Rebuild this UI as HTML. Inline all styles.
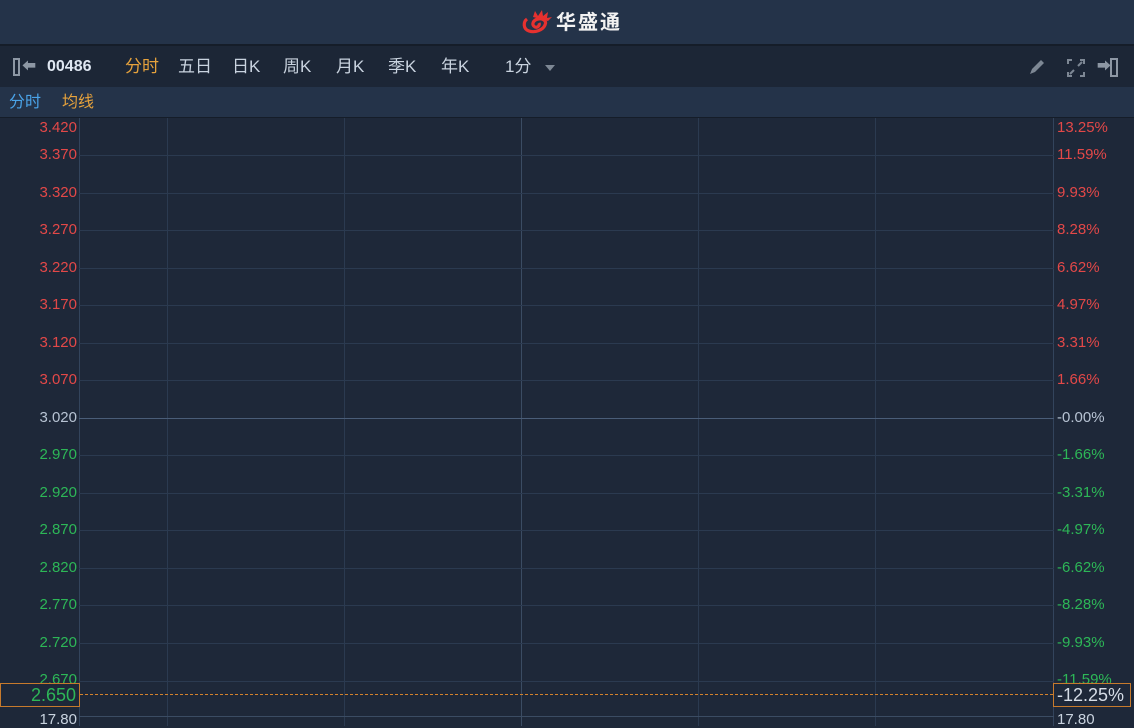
<!DOCTYPE html>
<html><head><meta charset="utf-8"><style>
*{margin:0;padding:0;box-sizing:border-box}
body{width:1134px;height:726px;overflow:hidden;background:#1e2839;font-family:"Liberation Sans","Noto Sans CJK SC",sans-serif;position:relative}
.a{position:absolute}
.t{position:absolute;font-size:15px;line-height:16px;white-space:nowrap}
.l{right:1057px;text-align:right}
.r{left:1057px}
.red{color:#e34848}.grn{color:#2db757}.gry{color:#b7c3d3}
.h{position:absolute;left:79px;width:975px;height:1px;background:#2b3a50}
.v{position:absolute;top:118px;width:1px;height:608px;background:#2b3a50}
.tb{position:absolute;top:56px;font-size:17px;color:#c9d3df;line-height:22px}
</style></head><body>
<div class="a" style="left:0;top:0;width:1134px;height:44px;background:#243349"></div>
<div class="a" style="left:0;top:44px;width:1134px;height:2px;background:#151d29"></div>
<div class="a" style="left:0;top:46px;width:1134px;height:41px;background:#1c2636"></div>
<div class="a" style="left:0;top:87px;width:1134px;height:31px;background:#243349;border-bottom:1px solid #151d29"></div>
<!-- logo -->
<svg class="a" style="left:521px;top:9px" width="32" height="26" viewBox="0 0 32 26"><path d="M6 10 C2 13 2 20 8 22 C14 24 22 21 24 16 C26 12 22 9 17 10 C12 11 10 16 14 18 C17 19 19 16 18 14" fill="none" stroke="#e6312f" stroke-width="3.2"/><path d="M12 8 L14 2 L17 7 L21 1 L22 7 L27 3 L26 9 L31 8 L27 12" fill="#e6312f"/></svg>
<div class="t" style="left:556px;top:11px;font-size:20px;line-height:24px;color:#f2f2f2;font-weight:bold;letter-spacing:2px">华盛通</div>
<!-- toolbar -->
<div class="a" style="left:13px;top:58px;width:7px;height:18px;border:2px solid #8d97a4"></div>
<div class="t" style="left:22px;top:58px;color:#8d97a4;font-size:14px">⬅</div>
<div class="tb" style="left:47px;font-weight:bold;color:#dfe7f2;font-size:16px">00486</div>
<div class="tb" style="left:125px;color:#e6a23c">分时</div>
<div class="tb" style="left:178px">五日</div>
<div class="tb" style="left:232px">日K</div>
<div class="tb" style="left:283px">周K</div>
<div class="tb" style="left:336px">月K</div>
<div class="tb" style="left:388px">季K</div>
<div class="tb" style="left:441px">年K</div>
<div class="tb" style="left:505px">1分</div>
<div class="a" style="left:545px;top:65px;width:0;height:0;border-left:5px solid transparent;border-right:5px solid transparent;border-top:6px solid #7d8794"></div>
<svg class="a" style="left:1026px;top:56px" width="22" height="22" viewBox="0 0 22 22"><path d="M4 18 L6 13 L15 4 L18 7 L9 16 Z" fill="#7d8794"/></svg>
<svg class="a" style="left:1065px;top:57px" width="22" height="22" viewBox="0 0 22 22" fill="none" stroke="#7d8794" stroke-width="2"><path d="M3 7V3h4M15 3h4v4M19 15v4h-4M7 19H3v-4M9 13l-4 4M13 9l4-4"/></svg>
<div class="t" style="left:1097px;top:58px;color:#8d97a4;font-size:14px">➡</div>
<div class="a" style="left:1110px;top:58px;width:8px;height:19px;border:2px solid #8d97a4"></div>
<div class="t" style="left:9px;top:93px;font-size:16px;line-height:20px;color:#4aa3e8">分时</div>
<div class="t" style="left:62px;top:93px;font-size:16px;line-height:20px;color:#e6a23c">均线</div>
<!-- grid -->
<div class="v" style="left:79px;background:#33445c"></div>
<div class="v" style="left:167px"></div><div class="v" style="left:344px"></div>
<div class="v" style="left:521px;background:#3b4c63"></div>
<div class="v" style="left:698px"></div><div class="v" style="left:875px"></div>
<div class="v" style="left:1053px;background:#33445c"></div>
<div class="h" style="top:155px"></div><div class="h" style="top:193px"></div><div class="h" style="top:230px"></div><div class="h" style="top:268px"></div><div class="h" style="top:305px"></div><div class="h" style="top:343px"></div><div class="h" style="top:380px"></div>
<div class="h" style="top:418px;background:#4a5d78"></div>
<div class="h" style="top:455px"></div><div class="h" style="top:493px"></div><div class="h" style="top:530px"></div><div class="h" style="top:568px"></div><div class="h" style="top:605px"></div><div class="h" style="top:643px"></div><div class="h" style="top:681px"></div>
<div class="h" style="top:716px;background:#3b4c63"></div>
<!-- left labels -->
<div class="t l red" style="top:120px">3.420</div>
<div class="t l red" style="top:147px">3.370</div>
<div class="t l red" style="top:185px">3.320</div>
<div class="t l red" style="top:222px">3.270</div>
<div class="t l red" style="top:260px">3.220</div>
<div class="t l red" style="top:297px">3.170</div>
<div class="t l red" style="top:335px">3.120</div>
<div class="t l red" style="top:372px">3.070</div>
<div class="t l gry" style="top:410px">3.020</div>
<div class="t l grn" style="top:447px">2.970</div>
<div class="t l grn" style="top:485px">2.920</div>
<div class="t l grn" style="top:522px">2.870</div>
<div class="t l grn" style="top:560px">2.820</div>
<div class="t l grn" style="top:597px">2.770</div>
<div class="t l grn" style="top:635px">2.720</div>
<div class="t l grn" style="top:672px">2.670</div>
<div class="t l gry" style="top:712px;color:#c9d3df">17.80</div>
<!-- right labels -->
<div class="t r red" style="top:120px">13.25%</div>
<div class="t r red" style="top:147px">11.59%</div>
<div class="t r red" style="top:185px">9.93%</div>
<div class="t r red" style="top:222px">8.28%</div>
<div class="t r red" style="top:260px">6.62%</div>
<div class="t r red" style="top:297px">4.97%</div>
<div class="t r red" style="top:335px">3.31%</div>
<div class="t r red" style="top:372px">1.66%</div>
<div class="t r gry" style="top:410px">-0.00%</div>
<div class="t r grn" style="top:447px">-1.66%</div>
<div class="t r grn" style="top:485px">-3.31%</div>
<div class="t r grn" style="top:522px">-4.97%</div>
<div class="t r grn" style="top:560px">-6.62%</div>
<div class="t r grn" style="top:597px">-8.28%</div>
<div class="t r grn" style="top:635px">-9.93%</div>
<div class="t r grn" style="top:672px">-11.59%</div>
<div class="t r" style="top:712px;color:#c9d3df">17.80</div>
<!-- current price -->
<div class="a" style="left:80px;top:694px;width:973px;border-top:1px dashed #d4822c"></div>
<div class="a" style="left:0;top:683px;width:80px;height:24px;background:#1e2839;border:1px solid #c77a2c"></div>
<div class="t grn" style="left:0;top:685px;width:76px;text-align:right;font-size:18px;line-height:20px">2.650</div>
<div class="a" style="left:1053px;top:683px;width:78px;height:24px;background:#1e2839;border:1px solid #c77a2c"></div>
<div class="t" style="left:1057px;top:685px;font-size:18px;line-height:20px;color:#d6dde7">-12.25%</div>
</body></html>
